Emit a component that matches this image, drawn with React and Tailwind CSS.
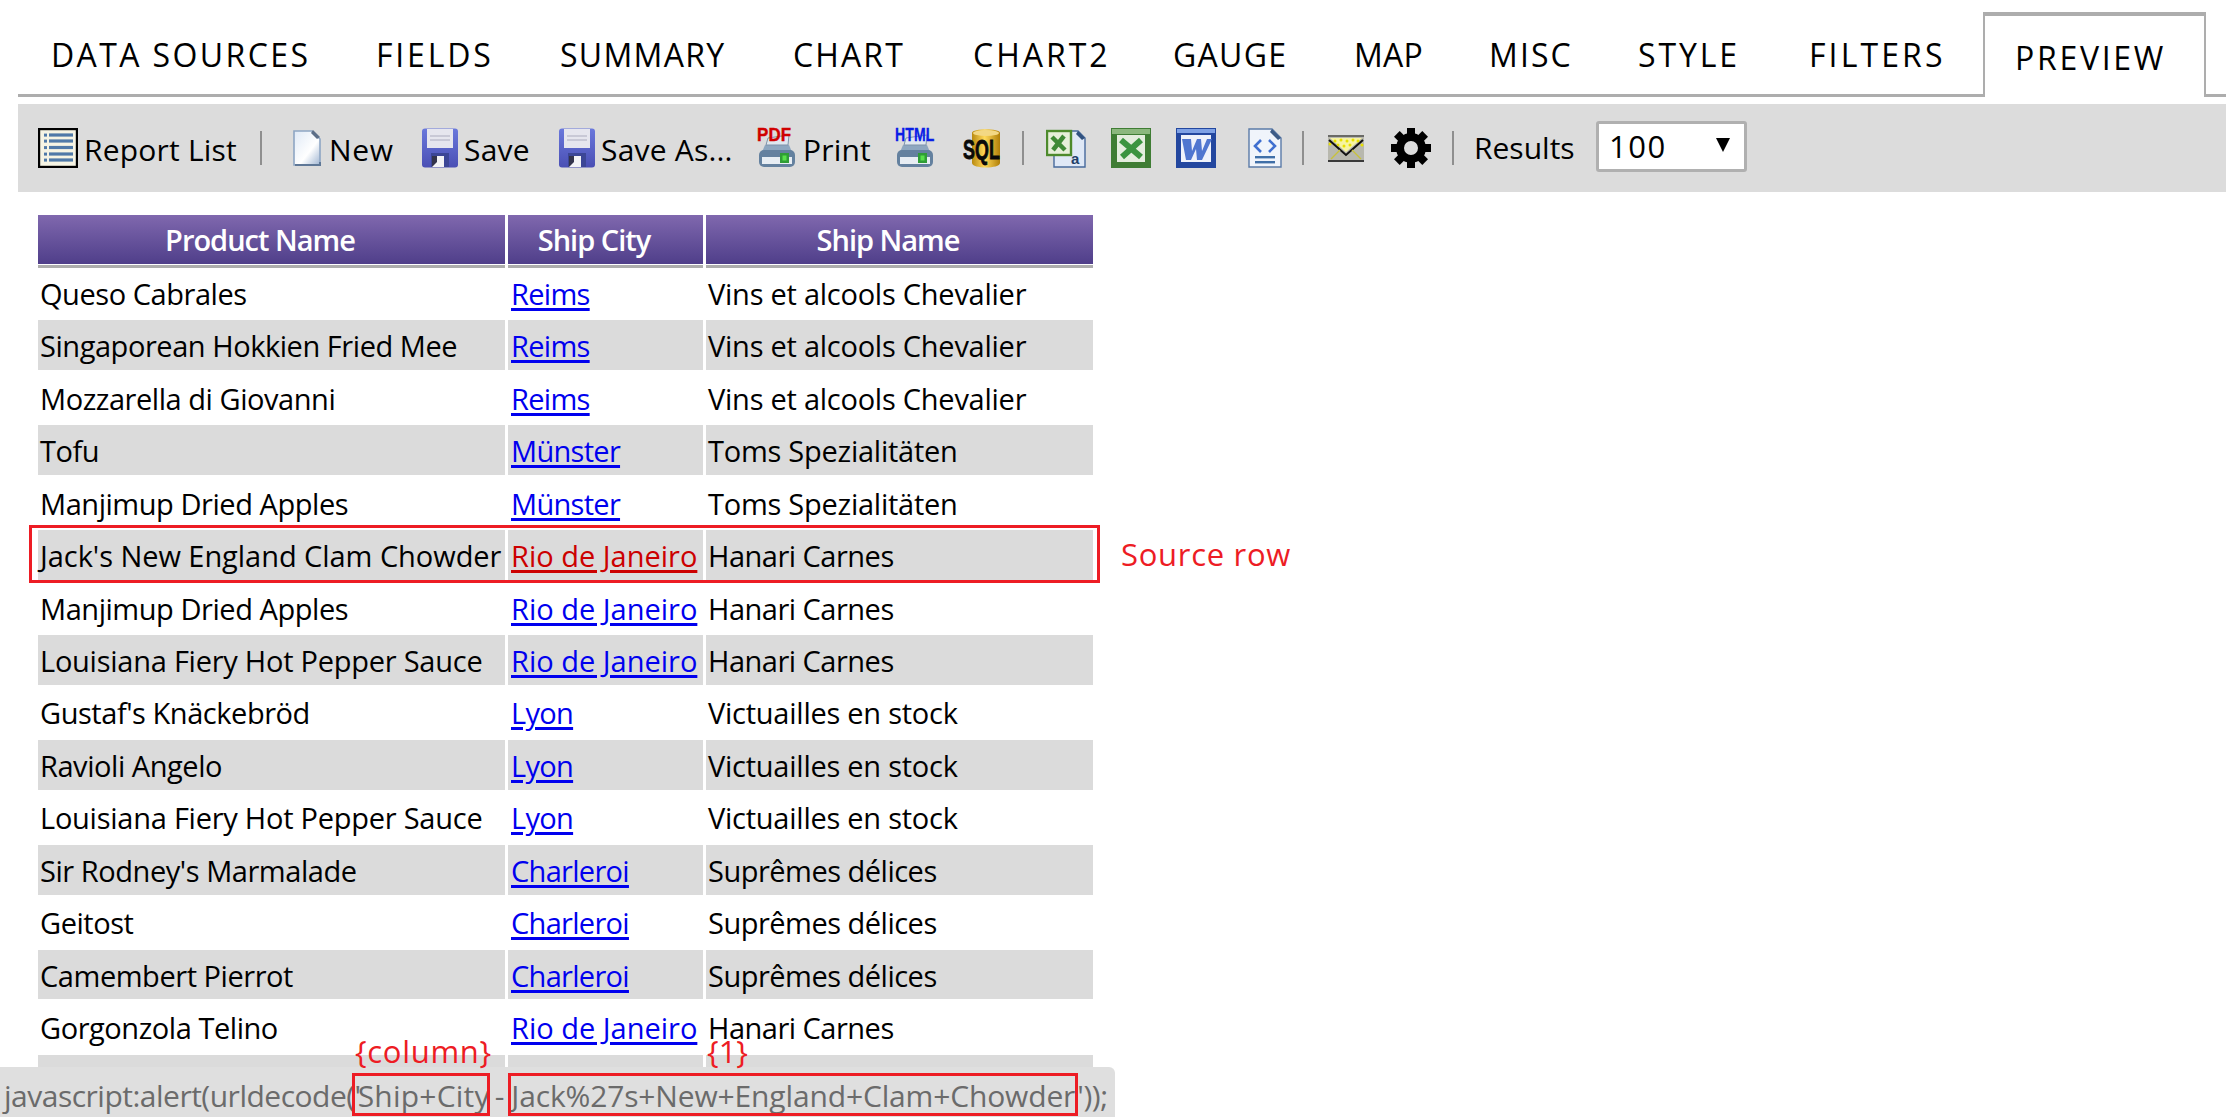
import React from "react";

const FONT = "font-['Open_Sans','Noto_Sans',sans-serif]";

const ReportIcon = () => (
  <svg width="40" height="40" viewBox="0 0 40 40" className="shrink-0">
    <rect x="1" y="1" width="38" height="38" fill="#f6f4e4" stroke="#000" strokeWidth="2.4" />
    {[7, 13, 19.5, 26, 32].map((y) => (
      <g key={y}>
        <rect x="6" y={y - 1.4} width="3" height="3" fill="#4f79a8" />
        <rect x="11" y={y - 1.6} width="24" height="3.2" fill="#4f79a8" />
      </g>
    ))}
  </svg>
);

const NewIcon = () => (
  <svg width="30" height="40" viewBox="0 0 30 40" className="shrink-0">
    <defs>
      <linearGradient id="ng" x1="0" y1="0" x2="1" y2="1">
        <stop offset="0" stopColor="#dfe9f6" />
        <stop offset="0.6" stopColor="#ffffff" />
        <stop offset="1" stopColor="#9fb5d2" />
      </linearGradient>
    </defs>
    <path d="M2 3h18l8 8v26H2z" fill="url(#ng)" stroke="#8ea6c4" strokeWidth="1.6" />
    <path d="M21 2l7 7-3 2-6-6z" fill="#5d6f88" />
    <path d="M3 37h25v-3" fill="none" stroke="#5f7897" strokeWidth="2" />
  </svg>
);

const SaveIcon = () => (
  <svg width="38" height="40" viewBox="0 0 38 40" className="shrink-0">
    <defs>
      <linearGradient id="sv" x1="0" y1="0" x2="0" y2="1">
        <stop offset="0" stopColor="#6a78dc" />
        <stop offset="1" stopColor="#4a4fb4" />
      </linearGradient>
    </defs>
    <rect x="1" y="0.5" width="36" height="39" rx="3" fill="url(#sv)" />
    <rect x="6" y="1" width="26" height="19" fill="#e6e6ee" />
    <rect x="9" y="7" width="20" height="2" fill="#c9c9d6" />
    <rect x="9" y="11" width="20" height="2" fill="#c9c9d6" />
    <rect x="10" y="25" width="18" height="14" fill="#3c4696" />
    <path d="M11 39V28h12v11z" fill="#f3f3f6" />
    <path d="M11 39V28h5v6z" fill="#34344c" />
  </svg>
);

const Printer = () => (
  <g>
    <path d="M8 17h24l3 7H5z" fill="#8ea7c0" />
    <path d="M11 10l21-3-1 10H9z" fill="#dfe7ef" stroke="#7e93aa" strokeWidth="1" />
    <rect x="2" y="22" width="36" height="17" rx="5" fill="#64819f" />
    <rect x="5" y="29" width="30" height="7" fill="#e7edf3" />
    <rect x="23" y="25" width="9" height="10" fill="#2f9d36" />
    <rect x="25.5" y="27.5" width="4" height="5" fill="#58e04a" />
  </g>
);

const PdfIcon = () => (
  <svg width="40" height="40" viewBox="0 0 40 40" className="shrink-0 overflow-visible">
    <Printer />
    <text transform="translate(0 13) scale(0.94 1)" fontFamily="Liberation Sans" fontWeight="700" fontSize="18" fill="#d00000" stroke="#d00000" strokeWidth="0.4">PDF</text>
  </svg>
);

const HtmlIcon = () => (
  <svg width="41" height="40" viewBox="0 0 41 40" className="shrink-0 overflow-visible">
    <Printer />
    <text transform="translate(0 13) scale(0.78 1)" fontFamily="Liberation Sans" fontWeight="700" fontSize="18" fill="#0a1ee6" stroke="#0a1ee6" strokeWidth="0.3">HTML</text>
  </svg>
);

const SqlIcon = () => (
  <svg width="40" height="40" viewBox="0 0 40 40" className="shrink-0">
    <defs>
      <linearGradient id="sq" x1="0" y1="0" x2="1" y2="0">
        <stop offset="0" stopColor="#b98a10" />
        <stop offset="0.45" stopColor="#ffd95a" />
        <stop offset="1" stopColor="#b07f08" />
      </linearGradient>
    </defs>
    <path d="M9 5c0-5 28-5 28 0v30c0 6-28 6-28 0z" fill="url(#sq)" />
    <ellipse cx="23" cy="5" rx="13" ry="3" fill="#f3d884" />
    <text transform="translate(0 31) scale(0.66 1)" fontFamily="Liberation Sans" fontWeight="700" fontSize="27" fill="#0a0a0a" stroke="#0a0a0a" strokeWidth="0.8">SQL</text>
  </svg>
);

const ExcelExportIcon = () => (
  <svg width="40" height="40" viewBox="0 0 40 40" className="shrink-0">
    <path d="M8 3h24l7 7v29H8z" fill="#dfe8f6" stroke="#476a9c" strokeWidth="1.4" />
    <path d="M32 3l7 7-3 2-6-6z" fill="#31527f" />
    <rect x="1" y="3" width="24" height="24" fill="#e6efd9" stroke="#4d8a2c" strokeWidth="2.4" />
    <path d="M6 9l13 13M18 8L7 22" stroke="#3f8a35" strokeWidth="4.5" />
    <text x="25" y="36" fontFamily="Liberation Sans" fontSize="15" fontWeight="700" fill="#233f68">a</text>
  </svg>
);

const ExcelIcon = () => (
  <svg width="40" height="40" viewBox="0 0 40 40" className="shrink-0">
    <rect x="0" y="0" width="40" height="40" fill="#3f7d34" />
    <rect x="1" y="1" width="38" height="5" fill="#8cb87e" />
    <rect x="6" y="7" width="28" height="27" fill="#e4edde" />
    <path d="M10 12l20 17M30 12L11 29" stroke="#3b9440" strokeWidth="6" />
  </svg>
);

const WordIcon = () => (
  <svg width="40" height="40" viewBox="0 0 40 40" className="shrink-0">
    <rect x="0" y="0" width="40" height="40" fill="#23479f" />
    <rect x="1" y="1" width="38" height="4" fill="#7ea1e6" />
    <rect x="5" y="7" width="30" height="27" fill="#eef2fb" />
    <path d="M6 11h9l1 12 5-12h4l1 12 5-12h5l-10 21h-5l-1-11-5 11h-5z" fill="#4f76d0" />
  </svg>
);

const CodeDocIcon = () => (
  <svg width="34" height="40" viewBox="0 0 34 40" className="shrink-0">
    <path d="M1 1h23l9 9v29H1z" fill="#f0f4fb" stroke="#5b7ba8" strokeWidth="1.4" />
    <path d="M24 1l9 9-3 2-8-8z" fill="#3d5b86" />
    <path d="M13 12l-6 6 6 6M21 12l6 6-6 6" fill="none" stroke="#3f6fd0" strokeWidth="2.6" />
    <rect x="7" y="28" width="20" height="2.4" fill="#3f6fa8" />
    <rect x="7" y="33" width="20" height="2.4" fill="#3f6fa8" />
  </svg>
);

const MailIcon = () => (
  <svg width="36" height="27" viewBox="0 0 36 27" className="shrink-0">
    <rect x="0" y="0" width="36" height="27" fill="#b8b8ae" />
    <rect x="0" y="0" width="36" height="2" fill="#6a6a66" />
    <rect x="0" y="25" width="36" height="2" fill="#3a3a3a" />
    <path d="M2 3h32L18 17z" fill="#f7f4a0" />
    <g fill="#e8e000">
      {[[7, 6], [13, 5], [19, 6], [25, 5], [30, 6], [10, 10], [16, 11], [22, 10], [2, 9], [34, 10]].map(([x, y]) => (
        <circle key={`${x}-${y}`} cx={x} cy={y} r="1.5" />
      ))}
    </g>
    <path d="M1 5l17 15L35 5" fill="none" stroke="#111" strokeWidth="2" />
    <path d="M3 24l9-9M33 24l-9-9" fill="none" stroke="#c8c23a" strokeWidth="1.4" />
  </svg>
);

const GearIcon = () => (
  <svg width="40" height="40" viewBox="0 0 40 40" className="shrink-0">
    <g fill="#000">
      {[0, 45, 90, 135, 180, 225, 270, 315].map((a) => (
        <rect key={a} x="16" y="0" width="8" height="12" transform={`rotate(${a} 20 20)`} />
      ))}
    </g>
    <circle cx="20" cy="20" r="11" fill="none" stroke="#000" strokeWidth="8" />
  </svg>
);

const Sep = ({ className }) => <span className={`w-[2px] h-[34px] bg-[#8f8f8f] shrink-0 ${className}`} />;

const tabs = [
  ["DATA SOURCES", "ml-[33px]", "w-[256px]", "tracking-[2.4px]"],
  ["FIELDS", "ml-[69px]", "w-[116px]", "tracking-[2.8px]"],
  ["SUMMARY", "ml-[68px]", "w-[164px]", "tracking-[1.3px]"],
  ["CHART", "ml-[69px]", "w-[111px]", "tracking-[2.1px]"],
  ["CHART2", "ml-[69px]", "w-[131px]", "tracking-[3px]"],
  ["GAUGE", "ml-[69px]", "w-[112px]", "tracking-[1.3px]"],
  ["MAP", "ml-[69px]", "w-[66px]", "tracking-[0.2px]"],
  ["MISC", "ml-[69px]", "w-[82px]", "tracking-[2.1px]"],
  ["STYLE", "ml-[67px]", "w-[103px]", "tracking-[2.9px]"],
  ["FILTERS", "ml-[68px]", "w-[137px]", "tracking-[3.1px]"],
];

const rows = [
  ["Queso Cabrales", "Reims", "Vins et alcools Chevalier"],
  ["Singaporean Hokkien Fried Mee", "Reims", "Vins et alcools Chevalier"],
  ["Mozzarella di Giovanni", "Reims", "Vins et alcools Chevalier"],
  ["Tofu", "Münster", "Toms Spezialitäten"],
  ["Manjimup Dried Apples", "Münster", "Toms Spezialitäten"],
  ["Jack's New England Clam Chowder", "Rio de Janeiro", "Hanari Carnes"],
  ["Manjimup Dried Apples", "Rio de Janeiro", "Hanari Carnes"],
  ["Louisiana Fiery Hot Pepper Sauce", "Rio de Janeiro", "Hanari Carnes"],
  ["Gustaf's Knäckebröd", "Lyon", "Victuailles en stock"],
  ["Ravioli Angelo", "Lyon", "Victuailles en stock"],
  ["Louisiana Fiery Hot Pepper Sauce", "Lyon", "Victuailles en stock"],
  ["Sir Rodney's Marmalade", "Charleroi", "Suprêmes délices"],
  ["Geitost", "Charleroi", "Suprêmes délices"],
  ["Camembert Pierrot", "Charleroi", "Suprêmes délices"],
  ["Gorgonzola Telino", "Rio de Janeiro", "Hanari Carnes"],
  ["", "", ""],
];

const nameTracking = (name) => {
  if (name.startsWith("Jack")) return "tracking-[-0.05px]";
  if (name.startsWith("Louisiana")) return "tracking-[-0.25px]";
  return "tracking-[-0.45px]";
};

const shipTracking = (ship) =>
  ship === "Hanari Carnes" || ship === "Suprêmes délices" ? "tracking-[-0.5px]" : "tracking-[-0.25px]";

const headerCell =
  "h-full flex items-center justify-center text-white text-[29px] font-semibold tracking-[-1px] pb-[3px] pr-[23px] bg-gradient-to-b from-[#8068ae] to-[#4c3b87] shadow-[inset_0_-3px_0_#adadad,inset_0_-4px_0_#ffffff]";

export default function App() {
  return (
    <div className={`relative h-[1117px] overflow-hidden bg-white text-black ${FONT}`}>
      {/* Tabs */}
      <div className="ml-[18px] pt-[12px] h-[97px] flex items-stretch border-b-[3px] border-[#adadad]">
        {tabs.map(([t, ml, w, tr]) => (
          <div key={t} className={`${ml} ${w} ${tr} pt-[25px] text-[32px] leading-[36px] whitespace-nowrap`}>
            {t}
          </div>
        ))}
        <div className="ml-[37px] w-[223px] h-[85px] border-t-[4px] border-x-[2px] border-[#adadad] bg-white pl-[30px] pt-[24px] text-[32px] leading-[36px] tracking-[2.7px] -mb-[3px] z-10">
          PREVIEW
        </div>
      </div>

      {/* Toolbar */}
      <div className="ml-[18px] mt-[7px] h-[88px] bg-[#dcdcdc] flex items-center pl-[20px] text-[30px] tracking-[0.2px] whitespace-nowrap">
        <ReportIcon />
        <span className="ml-[6px] w-[153px] mt-[2px]">Report List</span>
        <Sep className="ml-[23px]" />
        <span className="ml-[30px]"><NewIcon /></span>
        <span className="ml-[7px] w-[64px] mt-[2px] tracking-[0.6px]">New</span>
        <span className="ml-[28px]"><SaveIcon /></span>
        <span className="ml-[5px] w-[65px] mt-[2px]">Save</span>
        <span className="ml-[29px]"><SaveIcon /></span>
        <span className="ml-[5px] w-[130px] mt-[2px]">Save As...</span>
        <span className="ml-[26px]"><PdfIcon /></span>
        <span className="ml-[6px] w-[67px] mt-[2px]">Print</span>
        <span className="ml-[25px]"><HtmlIcon /></span>
        <span className="ml-[27px]"><SqlIcon /></span>
        <Sep className="ml-[19px]" />
        <span className="ml-[22px]"><ExcelExportIcon /></span>
        <span className="ml-[25px]"><ExcelIcon /></span>
        <span className="ml-[25px]"><WordIcon /></span>
        <span className="ml-[32px]"><CodeDocIcon /></span>
        <Sep className="ml-[20px]" />
        <span className="ml-[24px]"><MailIcon /></span>
        <span className="ml-[27px]"><GearIcon /></span>
        <Sep className="ml-[21px]" />
        <span className="ml-[20px] w-[100px] -mt-[1px] tracking-[0px]">Results</span>
        <div className="relative ml-[22px] -mt-[3px] w-[151px] h-[51px] bg-white border-[3px] border-[#b0b0b0] rounded-[3px] flex items-center pl-[10px] text-[31px] tracking-[1.5px]">
          100
          <svg width="14" height="14" viewBox="0 0 14 14" className="absolute right-[14px] top-[14px]">
            <path d="M0 0h14L7 14z" fill="#000" />
          </svg>
        </div>
      </div>

      {/* Table */}
      <div className="ml-[38px] mt-[23px] w-[1056px] text-[29px]">
        <div className="grid grid-cols-[467px_195px_387px] gap-x-[3px] h-[52.5px]">
          <div className={headerCell}>Product Name</div>
          <div className={headerCell}>Ship City</div>
          <div className={headerCell}>Ship Name</div>
        </div>
        <div className="grid grid-cols-[467px_195px_387px] gap-x-[3px] gap-y-[2.8px] auto-rows-[49.7px]">
          {rows.map((r, i) => {
            const bg = i % 2 === 1 ? "bg-[#dbdbdb]" : "";
            const link = i === 5 ? "text-[#cc0000]" : "text-[#0000ee]";
            const linkTr = r[1] === "Rio de Janeiro" ? "tracking-[0px]" : "tracking-[-0.7px]";
            return (
              <React.Fragment key={i}>
                <div className={`${bg} ${nameTracking(r[0])} pl-[2px] pt-[2px] flex items-center whitespace-nowrap`}>{r[0]}</div>
                <div className={`${bg} pl-[3px] pt-[2px] flex items-center whitespace-nowrap`}>
                  <a href="#" className={`${link} ${linkTr} underline decoration-[3px] underline-offset-[3px]`}>{r[1]}</a>
                </div>
                <div className={`${bg} ${shipTracking(r[2])} pl-[2px] pt-[2px] flex items-center whitespace-nowrap`}>{r[2]}</div>
              </React.Fragment>
            );
          })}
        </div>
      </div>

      {/* Annotation: source row */}
      <div className="absolute left-[29px] top-[525px] w-[1071px] h-[58px] border-[3px] border-[#ed1c24]" />
      <div className="absolute left-[1121px] top-[534px] text-[31px] leading-[40px] tracking-[0.7px] text-[#ed1c24]">Source row</div>

      {/* Status bar */}
      <div className="absolute left-0 bottom-0 w-[1115px] h-[50px] bg-[#dfdfdf] rounded-tr-[6px] text-[#6b6b6b] text-[30px] leading-[50px] pt-[4px] pl-[4px] whitespace-nowrap flex">
        <span className="tracking-[-0.5px]">javascript:alert(urldecode('</span>
        <span className="-ml-[3px] tracking-[0.2px]">Ship+City</span>
        <span className="ml-[5px]">-</span>
        <span className="ml-[7px] tracking-[-0.15px]">Jack%27s+New+England+Clam+Chowder</span>
        <span className="ml-[2px] tracking-[-0.4px]">'));</span>
      </div>
      <div className="absolute left-[352px] top-[1073px] w-[138px] h-[43px] border-[3px] border-[#ed1c24]" />
      <div className="absolute left-[508px] top-[1073px] w-[570px] h-[43px] border-[3px] border-[#ed1c24]" />
      <div className="absolute left-[355px] top-[1031px] text-[31px] leading-[40px] tracking-[0.7px] text-[#ed1c24]">{"{column}"}</div>
      <div className="absolute left-[707px] top-[1031px] text-[31px] leading-[40px] text-[#ed1c24]">{"{1}"}</div>
    </div>
  );
}
